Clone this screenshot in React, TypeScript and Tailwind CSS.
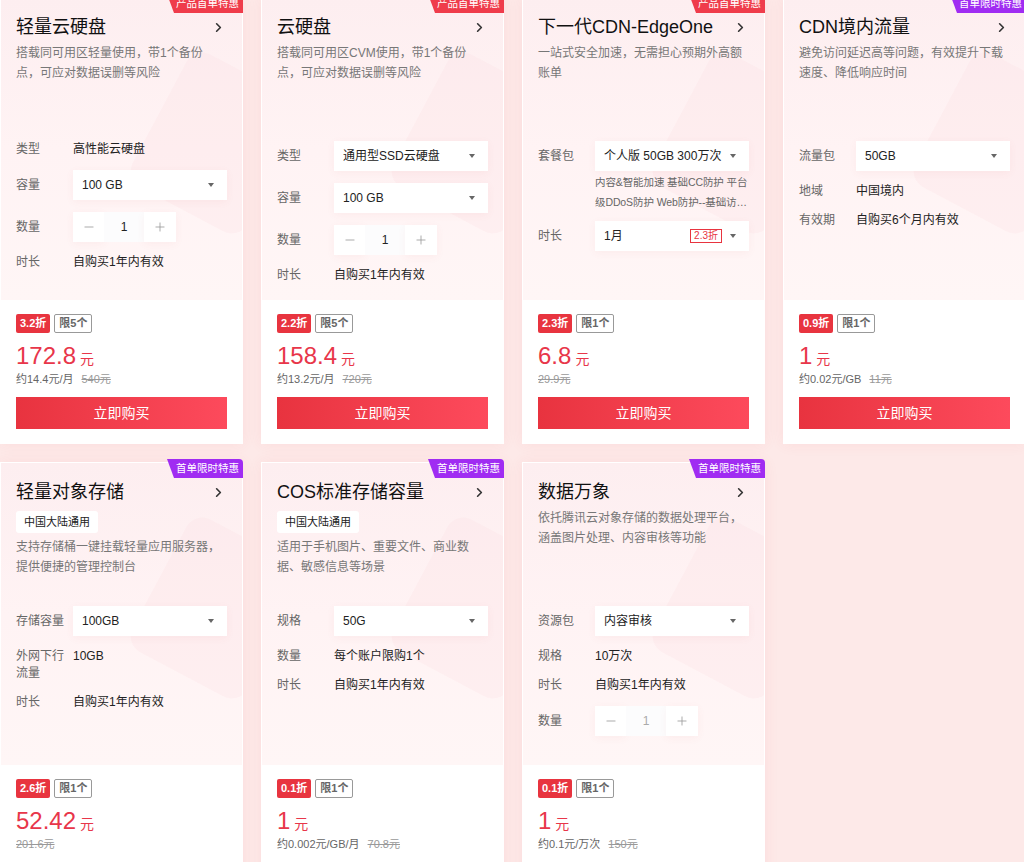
import React from 'react';
import { ChevronRight, Minus, Plus } from 'lucide-react';

type Row = {
  label: string;
  kind: 'text' | 'select' | 'stepper';
  value?: string;
  note?: string;
  tag?: string;
  muted?: boolean;
};

type Card = {
  title: string;
  badge: 'red' | 'purple';
  region?: boolean;
  desc: string;
  rows: Row[];
  discount: string;
  limit: string;
  price: string;
  per?: string;
  orig: string;
};

const cards: Card[] = [
  {
    title: '轻量云硬盘',
    badge: 'red',
    desc: '搭载同可用区轻量使用，带1个备份点，可应对数据误删等风险',
    rows: [
      { label: '类型', kind: 'text', value: '高性能云硬盘' },
      { label: '容量', kind: 'select', value: '100 GB' },
      { label: '数量', kind: 'stepper' },
      { label: '时长', kind: 'text', value: '自购买1年内有效' },
    ],
    discount: '3.2折',
    limit: '限5个',
    price: '172.8',
    per: '约14.4元/月',
    orig: '540元',
  },
  {
    title: '云硬盘',
    badge: 'red',
    desc: '搭载同可用区CVM使用，带1个备份点，可应对数据误删等风险',
    rows: [
      { label: '类型', kind: 'select', value: '通用型SSD云硬盘' },
      { label: '容量', kind: 'select', value: '100 GB' },
      { label: '数量', kind: 'stepper' },
      { label: '时长', kind: 'text', value: '自购买1年内有效' },
    ],
    discount: '2.2折',
    limit: '限5个',
    price: '158.4',
    per: '约13.2元/月',
    orig: '720元',
  },
  {
    title: '下一代CDN-EdgeOne',
    badge: 'red',
    desc: '一站式安全加速，无需担心预期外高额账单',
    rows: [
      {
        label: '套餐包',
        kind: 'select',
        value: '个人版 50GB 300万次',
        note: '内容&智能加速 基础CC防护 平台级DDoS防护 Web防护--基础访问控制 Bot管理',
      },
      { label: '时长', kind: 'select', value: '1月', tag: '2.3折' },
    ],
    discount: '2.3折',
    limit: '限1个',
    price: '6.8',
    orig: '29.9元',
  },
  {
    title: 'CDN境内流量',
    badge: 'purple',
    desc: '避免访问延迟高等问题，有效提升下载速度、降低响应时间',
    rows: [
      { label: '流量包', kind: 'select', value: '50GB' },
      { label: '地域', kind: 'text', value: '中国境内' },
      { label: '有效期', kind: 'text', value: '自购买6个月内有效' },
    ],
    discount: '0.9折',
    limit: '限1个',
    price: '1',
    per: '约0.02元/GB',
    orig: '11元',
  },
  {
    title: '轻量对象存储',
    badge: 'purple',
    region: true,
    desc: '支持存储桶一键挂载轻量应用服务器，提供便捷的管理控制台',
    rows: [
      { label: '存储容量', kind: 'select', value: '100GB' },
      { label: '外网下行流量', kind: 'text', value: '10GB' },
      { label: '时长', kind: 'text', value: '自购买1年内有效' },
    ],
    discount: '2.6折',
    limit: '限1个',
    price: '52.42',
    orig: '201.6元',
  },
  {
    title: 'COS标准存储容量',
    badge: 'purple',
    region: true,
    desc: '适用于手机图片、重要文件、商业数据、敏感信息等场景',
    rows: [
      { label: '规格', kind: 'select', value: '50G' },
      { label: '数量', kind: 'text', value: '每个账户限购1个' },
      { label: '时长', kind: 'text', value: '自购买1年内有效' },
    ],
    discount: '0.1折',
    limit: '限1个',
    price: '1',
    per: '约0.002元/GB/月',
    orig: '70.8元',
  },
  {
    title: '数据万象',
    badge: 'purple',
    desc: '依托腾讯云对象存储的数据处理平台，涵盖图片处理、内容审核等功能',
    rows: [
      { label: '资源包', kind: 'select', value: '内容审核' },
      { label: '规格', kind: 'text', value: '10万次' },
      { label: '时长', kind: 'text', value: '自购买1年内有效' },
      { label: '数量', kind: 'stepper', muted: true },
    ],
    discount: '0.1折',
    limit: '限1个',
    price: '1',
    per: '约0.1元/万次',
    orig: '150元',
  },
];

const Caret = () => (
  <span className="h-0 w-0 border-x-[3.5px] border-t-[4px] border-x-transparent border-t-[#666]" />
);

const Select = ({ value, tag }: { value?: string; tag?: string }) => (
  <div className="flex h-[30px] items-center bg-white pl-[9px] pr-[13px] shadow-[0_2px_8px_rgba(200,80,90,0.06)]">
    <span className="min-w-0 flex-1 truncate text-[12px] text-[#222]">{value}</span>
    {tag && (
      <span className="mr-[8px] border border-[#e8343f] px-[3px] text-[10px] leading-[12px] text-[#e8343f]">
        {tag}
      </span>
    )}
    <Caret />
  </div>
);

const Stepper = ({ muted }: { muted?: boolean }) => (
  <div className="flex h-[30px]">
    <button className="flex w-[31px] items-center justify-center bg-white text-[#999] shadow-[0_2px_8px_rgba(200,80,90,0.06)]">
      <Minus size={14} strokeWidth={1.4} />
    </button>
    <div
      className={`flex w-[40px] items-center justify-center bg-[#fcfcfd] text-[12px] ${
        muted ? 'text-[#aaa]' : 'text-[#222]'
      }`}
    >
      1
    </div>
    <button className="flex w-[32px] items-center justify-center bg-white text-[#999] shadow-[0_2px_8px_rgba(200,80,90,0.06)]">
      <Plus size={14} strokeWidth={1.4} />
    </button>
  </div>
);

const FormRow = ({ row }: { row: Row }) => {
  if (row.kind === 'text') {
    return (
      <div className="flex items-start text-[12px] leading-[17px]">
        <span className="w-[57px] shrink-0 pr-[4px] text-[#666]">{row.label}</span>
        <span className="min-w-0 flex-1 text-[#222]">{row.value}</span>
      </div>
    );
  }
  return (
    <div className="flex items-start">
      <span className="w-[57px] shrink-0 text-[12px] leading-[30px] text-[#666]">{row.label}</span>
      <div className="min-w-0 flex-1">
        {row.kind === 'select' ? <Select value={row.value} tag={row.tag} /> : <Stepper muted={row.muted} />}
        {row.note && (
          <p className="mb-[-3px] mt-[1px] line-clamp-2 text-[10.5px] leading-[20px] tracking-[-0.1px] text-[#666]">
            {row.note}
          </p>
        )}
      </div>
    </div>
  );
};

const ProductCard = ({ card }: { card: Card }) => (
  <div className="relative flex h-[447px] flex-col border border-white shadow-[0_0_14px_rgba(232,52,64,0.07)]">
    <div
      className={`absolute right-[-1px] top-[-4px] z-10 rounded-tr-[4px] pl-[9px] pr-[4px] text-[10.5px] leading-[19px] text-white [clip-path:polygon(0_0,100%_0,100%_100%,7px_100%)] ${
        card.badge === 'red' ? 'bg-[#ef3c4b]' : 'bg-[#a02cf2]'
      }`}
    >
      {card.badge === 'red' ? '产品首单特惠' : '首单限时特惠'}
    </div>

    <div className="relative flex-1 overflow-hidden bg-linear-to-b from-[#fdeef0] via-[#fff3f4] to-[#fff6f6]">
      <div className="absolute right-[-40px] top-[70px] h-[150px] w-[130px] rotate-[28deg] rounded-[18px] bg-[#fbe2e5]/30" />
      <div className="relative h-[143px] px-[15px] pt-[16px]">
        <div className="flex items-center justify-between">
          <h3 className="text-[18px] leading-[26px] text-[#111]">{card.title}</h3>
          <ChevronRight size={15} strokeWidth={2.6} className="mr-[1px] text-[#333]" />
        </div>
        {card.region && (
          <span className="mt-[6px] inline-block rounded-[3px] bg-white px-[8px] text-[11px] leading-[22px] text-[#222]">
            中国大陆通用
          </span>
        )}
        <p className={`${card.region ? 'mt-[4px]' : 'mt-[3px]'} pr-[2px] text-[12px] leading-[20px] text-[#777]`}>
          {card.desc}
        </p>
      </div>
      <div className="relative flex flex-col gap-[12px] px-[15px]">
        {card.rows.map((row) => (
          <FormRow key={row.label} row={row} />
        ))}
      </div>
    </div>

    <div className="h-[143px] bg-white px-[15px] pt-[14px]">
      <div className="flex h-[19px] gap-[4px]">
        <span className="rounded-[2px] bg-[#e8343f] px-[4px] text-[11px] font-bold leading-[19px] text-white">
          {card.discount}
        </span>
        <span className="rounded-[2px] border border-[#999] px-[4px] text-[11px] font-semibold leading-[17px] text-[#666]">
          {card.limit}
        </span>
      </div>
      <div className="mt-[8px] flex h-[30px] items-baseline overflow-hidden leading-[30px] text-[#e8364a]">
        <span className="text-[24px]">{card.price}</span>
        <span className="ml-[4px] text-[14px]">元</span>
      </div>
      <div className="flex h-[16px] gap-[8px] text-[11px] leading-[16px]">
        {card.per && <span className="text-[#666]">{card.per}</span>}
        <span className="text-[#999] line-through">{card.orig}</span>
      </div>
      <button className="mt-[10px] h-[32px] w-full bg-linear-to-r from-[#e8333f] to-[#fd4a5c] text-[14px] text-white">
        立即购买
      </button>
    </div>
  </div>
);

export default function App() {
  return (
    <div className="h-[862px] w-[1024px] overflow-hidden bg-[#fde9e8] font-['Liberation_Sans','Noto_Sans_CJK_SC',sans-serif]">
      <div className="-mt-[3px] grid w-[1044px] grid-cols-[repeat(4,243px)] gap-[18px]">
        {cards.map((card) => (
          <ProductCard key={card.title} card={card} />
        ))}
      </div>
    </div>
  );
}
